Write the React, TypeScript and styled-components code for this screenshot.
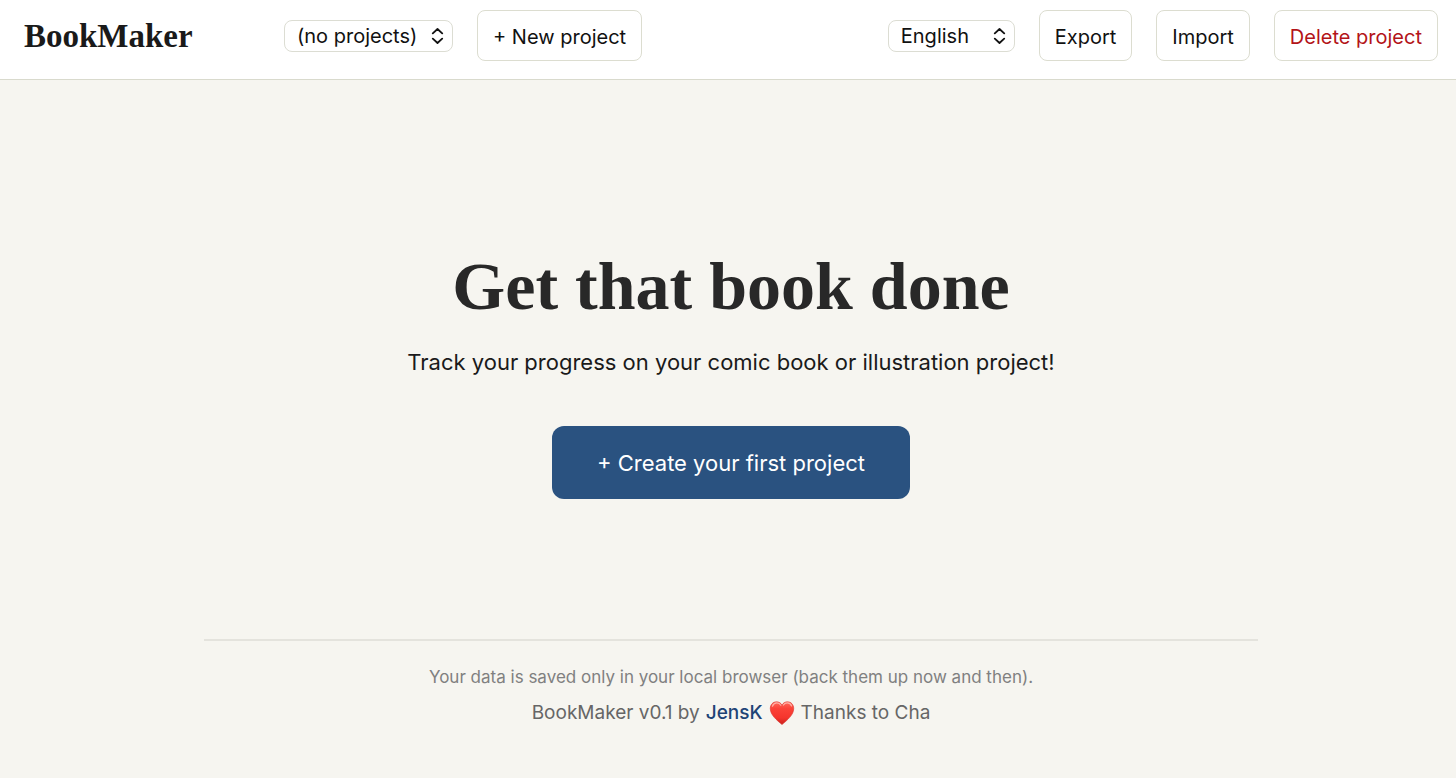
import React from "react";
import styled, { createGlobalStyle } from "styled-components";

const GlobalStyle = createGlobalStyle`
  *, *::before, *::after { box-sizing: border-box; }
  body {
    margin: 0;
    background: #f6f5f0;
    color: #1a1a1a;
    font-family: Inter, "Liberation Sans", sans-serif;
    font-size: 20px;
  }
  h1, p { margin: 0; }
`;

const Header = styled.header`
  display: flex;
  align-items: center;
  gap: 24px;
  padding: 10px 18px 18px 24px;
  background: #fff;
  border-bottom: 1px solid #d9dacd;
`;

const Brand = styled.div`
  width: 236px;
  font-family: "Liberation Serif", serif;
  font-size: 33px;
  line-height: 40px;
  font-weight: 700;
`;

const Actions = styled.div`
  display: flex;
  align-items: center;
  gap: 24px;
  margin-left: auto;
`;

const Picker = styled.div<{ $width: number }>`
  position: relative;
  width: ${(p) => p.$width}px;
`;

const Select = styled.select`
  display: block;
  appearance: none;
  width: 100%;
  height: 32px;
  padding: 0 32px 0 12px;
  border: 1px solid #dcddd3;
  border-radius: 8px;
  background: #fff;
  color: #111;
  font: inherit;
`;

const Chevrons = styled.svg`
  position: absolute;
  top: 8px;
  right: 9px;
  width: 13px;
  height: 16px;
  pointer-events: none;
`;

const Button = styled.button<{ $danger?: boolean }>`
  height: 51px;
  padding: 2px 15px 0;
  border: 1px solid #dcddd0;
  border-radius: 8px;
  background: #fff;
  color: ${(p) => (p.$danger ? "#b31318" : "#111")};
  font: inherit;
  white-space: nowrap;
`;

const Main = styled.main`
  display: flex;
  flex-direction: column;
  align-items: center;
  padding: 166px 18px 0 24px;
  text-align: center;
`;

const Title = styled.h1`
  font-family: "Liberation Serif", serif;
  font-size: 68px;
  line-height: 80px;
  font-weight: 700;
  color: #282828;
`;

const Lead = styled.p`
  margin-top: 20px;
  font-size: 22px;
  line-height: 32px;
`;

const PrimaryButton = styled.button`
  height: 73px;
  margin-top: 48px;
  padding: 0 45px;
  border: 0;
  border-radius: 12px;
  background: #2a5280;
  color: #fff;
  font: inherit;
  font-size: 22px;
`;

const Footer = styled.footer`
  width: 100%;
  max-width: 1054px;
  margin-top: 140px;
  padding: 22px 0 46px;
  border-top: 2px solid #e4e3dd;
  color: #666;
  font-size: 19px;
  line-height: 28px;
`;

const Note = styled.p`
  color: #808080;
  font-size: 17px;
`;

const Credits = styled.p`
  display: flex;
  justify-content: center;
  align-items: center;
  gap: 6px;
  margin-top: 8px;
`;

const AuthorLink = styled.a`
  color: #1f4476;
  font-weight: 500;
  text-decoration: none;
`;

function UpDown() {
  return (
    <Chevrons viewBox="0 0 13 16" fill="none" stroke="#111" strokeWidth="1.8" strokeLinecap="round" strokeLinejoin="round" aria-hidden="true">
      <path d="M1.8 5.4 6.5 1 11.2 5.4M1.8 10.6 6.5 15 11.2 10.6" />
    </Chevrons>
  );
}

function Heart() {
  return (
    <svg width="26" height="26" viewBox="0 0 26 26" role="img" aria-label="love">
      <defs>
        <linearGradient id="heartFill" x1="0" y1="0" x2="0" y2="1">
          <stop offset="0" stopColor="#ff6a5c" />
          <stop offset="0.3" stopColor="#fb4238" />
          <stop offset="0.7" stopColor="#f5352d" />
          <stop offset="1" stopColor="#c9211c" />
        </linearGradient>
      </defs>
      <path
        d="M13 5.2C11.8 2.8 9.8 1.8 7.5 1.8 4 1.8 1.3 4.6 1.3 8.6c0 6.2 6.2 11.3 11.7 16 5.5-4.7 11.7-9.8 11.7-16 0-4-2.7-6.8-6.2-6.8-2.3 0-4.3 1-5.5 3.4Z"
        fill="url(#heartFill)"
        stroke="#d92d26"
        strokeWidth="0.6"
      />
      <path d="M3.4 6.2C4.4 3.8 6 2.9 7.8 2.9c1.8 0 3.2.8 4 2.3M14.4 5c.9-1.4 2.2-2.1 3.9-2.1 1.8 0 3.4.9 4.3 3.1" fill="none" stroke="#ffb0a5" strokeWidth="1.2" strokeLinecap="round" />
    </svg>
  );
}

export default function App() {
  return (
    <>
      <GlobalStyle />
      <Header>
        <Brand>BookMaker</Brand>
        <Picker $width={169}>
          <Select aria-label="Project">
            <option>(no projects)</option>
          </Select>
          <UpDown />
        </Picker>
        <Button type="button">+ New project</Button>
        <Actions>
          <Picker $width={127}>
            <Select aria-label="Language">
              <option>English</option>
            </Select>
            <UpDown />
          </Picker>
          <Button type="button">Export</Button>
          <Button type="button">Import</Button>
          <Button type="button" $danger>
            Delete project
          </Button>
        </Actions>
      </Header>
      <Main>
        <Title>Get that book done</Title>
        <Lead>Track your progress on your comic book or illustration project!</Lead>
        <PrimaryButton type="button">+ Create your first project</PrimaryButton>
        <Footer>
          <Note>Your data is saved only in your local browser (back them up now and then).</Note>
          <Credits>
            <span>BookMaker v0.1 by</span>
            <AuthorLink href="#jensk">JensK</AuthorLink>
            <Heart />
            <span>Thanks to Cha</span>
          </Credits>
        </Footer>
      </Main>
    </>
  );
}
